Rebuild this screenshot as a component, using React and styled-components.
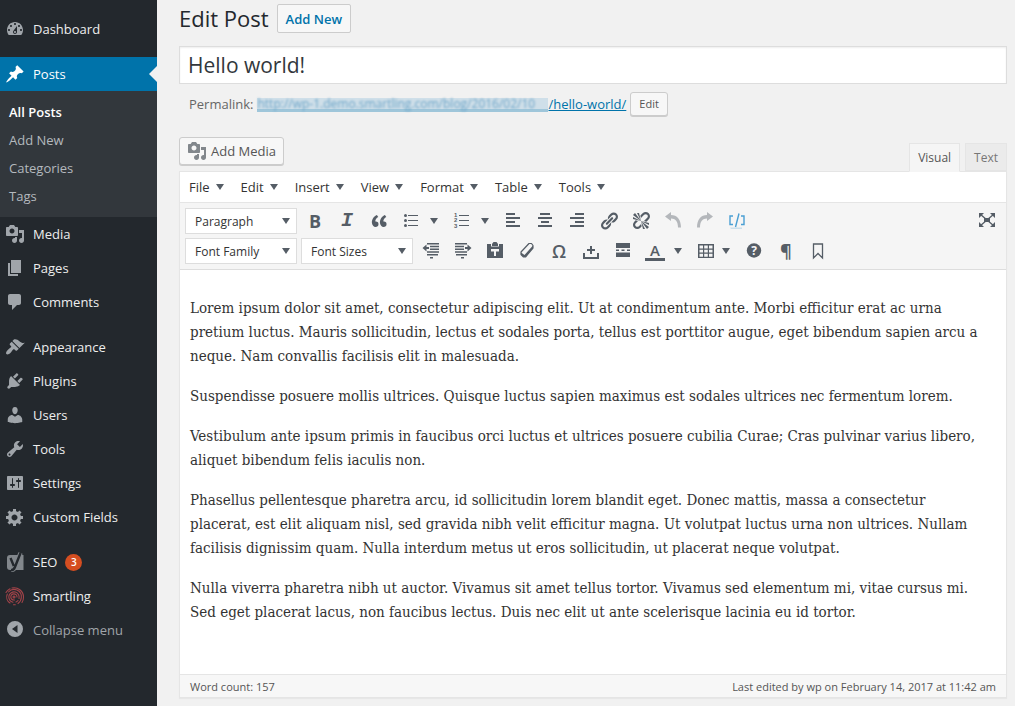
import React from "react";
import styled, { createGlobalStyle, css } from "styled-components";

const sans = '"Open Sans", "Noto Sans", sans-serif';
const ink = "#555d66";

const GlobalStyle = createGlobalStyle`
  *, *::before, *::after { box-sizing: border-box; }
  html { background: #f1f1f1; }
  body { margin: 0; font-family: ${sans}; font-size: 13px; color: #444; }
  button, input, select { font-family: inherit; margin: 0; }
  a { color: inherit; text-decoration: none; }
`;

/* ---------- shell ---------- */

const Page = styled.div`
  display: flex;
  min-height: 100vh;
`;

const Sidebar = styled.nav`
  flex: none;
  width: 157px;
  padding-top: 12px;
  background: #23282d;
`;

const MenuList = styled.ul`
  list-style: none;
  margin: 0;
  padding: 0;
  display: flex;
  flex-direction: column;
`;

const MenuGroup = styled(MenuList)`
  margin-bottom: 11px;
`;

const MenuLink = styled.a`
  position: relative;
  display: flex;
  align-items: center;
  gap: 8px;
  height: 34px;
  padding-left: 5px;
  color: #eee;
  svg { color: #a0a5aa; }
  ${(p) => p.$current && css`
    background: #0073aa;
    color: #fff;
    svg { color: #fff; }
    &::after {
      content: "";
      position: absolute;
      right: 0;
      top: 9px;
      border: 8px solid transparent;
      border-left-width: 0;
      border-right-color: #f1f1f1;
    }
  `}
`;

const CollapseButton = styled.button`
  display: flex;
  align-items: center;
  gap: 8px;
  width: 100%;
  height: 34px;
  padding: 0 0 0 5px;
  border: 0;
  background: none;
  font-size: 13px;
  color: #a0a5aa;
`;

const SubMenu = styled(MenuList)`
  padding: 7px 0;
  background: #32373c;
`;

const SubLink = styled.a`
  display: block;
  padding-left: 9px;
  line-height: 28px;
  font-weight: ${(p) => (p.$current ? 600 : 400)};
  color: ${(p) => (p.$current ? "#fff" : "#b4b9be")};
`;

const Badge = styled.span`
  display: flex;
  align-items: center;
  justify-content: center;
  width: 17px;
  height: 17px;
  border-radius: 50%;
  background: #d54e21;
  color: #fff;
  font-size: 10px;
  font-weight: 600;
`;

const Main = styled.main`
  flex: 1;
  min-width: 0;
  padding: 4px 8px 8px 22px;
`;

/* ---------- post header ---------- */

const TitleBar = styled.header`
  display: flex;
  align-items: center;
  gap: 8px;
  height: 29px;
`;

const Heading = styled.h1`
  margin: 0;
  font-size: 22px;
  font-weight: 400;
  line-height: 29px;
  color: #23282d;
`;

const AddNew = styled.a`
  display: flex;
  align-items: center;
  height: 29px;
  padding: 0 8px;
  border: 1px solid #ccc;
  border-radius: 2px;
  background: #f7f7f7;
  color: #0073aa;
  font-weight: 600;
`;

const TitleInput = styled.input`
  display: block;
  width: 100%;
  height: 38px;
  margin-top: 13px;
  padding: 0 8px;
  border: 1px solid #ddd;
  border-radius: 0;
  box-shadow: inset 0 1px 2px rgba(0, 0, 0, 0.07);
  background: #fff;
  font-size: 21px;
  color: #32373c;
  outline: 0;
`;

const Permalink = styled.div`
  display: flex;
  align-items: center;
  height: 25px;
  margin-top: 7px;
  padding-left: 10px;
  gap: 4px;
  color: #666;
`;

const PermalinkUrl = styled.a`
  display: flex;
  align-items: center;
  color: #0073aa;
  line-height: 16px;
`;

const Obscured = styled.span`
  min-width: 291px;
  white-space: nowrap;
  background: linear-gradient(transparent 2px, #cfdfe9 2px, #cfdfe9 13px, #9fc6da 13px);
  font-size: 12px;
  color: #6da5c8;
  span { filter: blur(1px); }
`;

const Slug = styled.span`
  text-decoration: underline;
`;

const Button = styled.button`
  display: flex;
  align-items: center;
  gap: 4px;
  height: ${(p) => (p.$small ? 24 : 28)}px;
  padding: 0 ${(p) => (p.$small ? 8 : 7)}px;
  border: 1px solid #ccc;
  border-radius: 3px;
  box-shadow: 0 1px 0 #ccc;
  background: #f7f7f7;
  font-size: ${(p) => (p.$small ? 11 : 13)}px;
  color: #555;
  svg { color: #82878c; }
`;

/* ---------- editor ---------- */

const EditorTop = styled.div`
  display: flex;
  justify-content: space-between;
  margin-top: 21px;
  height: 34px;
`;

const Tabs = styled.div`
  display: flex;
  align-items: flex-end;
  gap: 5px;
`;

const Tab = styled.button`
  position: relative;
  height: ${(p) => (p.$active ? 29 : 28)}px;
  margin-bottom: ${(p) => (p.$active ? -1 : 0)}px;
  padding: 0 8px;
  border: 1px solid #e5e5e5;
  border-bottom-color: ${(p) => (p.$active ? "#f5f5f5" : "#e5e5e5")};
  background: ${(p) => (p.$active ? "#f5f5f5" : "#ebebeb")};
  font-size: 12px;
  color: ${(p) => (p.$active ? "#555" : "#777")};
`;

const Editor = styled.section`
  border: 1px solid #e5e5e5;
  box-shadow: 0 1px 1px rgba(0, 0, 0, 0.04);
  background: #fff;
`;

const MenuBar = styled.div`
  display: flex;
  align-items: center;
  gap: 17px;
  height: 31px;
  padding-left: 9px;
  border-bottom: 1px solid #e5e5e5;
`;

const MenuButton = styled.button`
  display: flex;
  align-items: center;
  gap: 6px;
  height: 24px;
  padding: 0;
  border: 0;
  background: none;
  font-size: 13px;
  color: #333;
`;

const Caret = styled.i`
  flex: none;
  border: 4px solid transparent;
  border-top: 6px solid ${ink};
  border-bottom: 0;
`;

const Toolbar = styled.div`
  display: flex;
  flex-direction: column;
  gap: 4px;
  padding: 5px 3px 5px 5px;
  border-bottom: 1px solid #ddd;
  background: #f5f5f5;
`;

const ToolRow = styled.div`
  display: flex;
  align-items: center;
  height: 26px;
`;

const SelectBox = styled.label`
  position: relative;
  display: flex;
  align-items: center;
  width: 112px;
  height: 26px;
  margin-right: ${(p) => p.$gap}px;
  ${Caret} {
    position: absolute;
    right: 7px;
    pointer-events: none;
  }
`;

const Select = styled.select`
  appearance: none;
  width: 100%;
  height: 100%;
  padding: 0 20px 0 9px;
  border: 1px solid #ddd;
  border-radius: 0;
  background: #fff;
  font-size: 12px;
  color: #333;
`;

const ToolButton = styled.button`
  display: flex;
  align-items: center;
  justify-content: center;
  width: 32px;
  height: 26px;
  padding: 0;
  border: 0;
  background: none;
  color: ${(p) => p.$color || ink};
  opacity: ${(p) => (p.disabled ? 0.4 : 1)};
`;

const ArrowButton = styled(ToolButton)`
  width: ${(p) => (p.$narrow ? 16 : 19)}px;
  padding-right: ${(p) => (p.$narrow ? 8 : 5)}px;
`;

const Letter = styled.span`
  font-family: ${(p) => p.$family || sans};
  font-size: ${(p) => p.$size || 18}px;
  font-weight: ${(p) => p.$weight || 700};
  font-style: ${(p) => (p.$italic ? "italic" : "normal")};
  line-height: 18px;
`;

const ColorLetter = styled(Letter)`
  width: 20px;
  border-bottom: 3px solid ${ink};
  line-height: 16px;
`;

const Spacer = styled.span`
  flex: 1;
`;

const Content = styled.article`
  padding: 26px 24px 50px 10px;
  font-family: "DejaVu Serif Condensed", "DejaVu Serif", serif;
  font-size: 15px;
  line-height: 24px;
  color: #333;
  p { margin: 0 0 16px; }
  p:last-child { margin: 0; }
`;

const StatusBar = styled.footer`
  display: flex;
  align-items: center;
  justify-content: space-between;
  height: 23px;
  padding: 0 10px;
  border-top: 1px solid #e5e5e5;
  background: #f7f7f7;
  font-size: 11px;
  color: #555;
`;

/* ---------- icons ---------- */

const Svg = styled.svg.attrs({ viewBox: "0 0 20 20", "aria-hidden": true })`
  flex: none;
  width: 20px;
  height: 20px;
  fill: currentColor;
`;

const paths = {
  dashboard: "M3.76 16h12.48c1.1-1.37 1.76-3.11 1.76-5 0-4.42-3.58-8-8-8s-8 3.58-8 8c0 1.89.66 3.63 1.76 5zM10 4c.55 0 1 .45 1 1s-.45 1-1 1-1-.45-1-1 .45-1 1-1zM6 6c.55 0 1 .45 1 1s-.45 1-1 1-1-.45-1-1 .45-1 1-1zm8 0c.55 0 1 .45 1 1s-.45 1-1 1-1-.45-1-1 .45-1 1-1zm-5.37 5.55L12 7v6c0 1.1-.9 2-2 2s-2-.9-2-2c0-.57.24-1.08.63-1.45zM4 10c.55 0 1 .45 1 1s-.45 1-1 1-1-.45-1-1 .45-1 1-1zm12 0c.55 0 1 .45 1 1s-.45 1-1 1-1-.45-1-1 .45-1 1-1zm-5 3c0-.55-.45-1-1-1s-1 .45-1 1 .45 1 1 1 1-.45 1-1z",
  pin: "M10.44 3.02l1.82-1.82 6.36 6.35-1.83 1.82c-1.05-.68-2.48-.57-3.41.36l-.75.75c-.92.93-1.04 2.35-.35 3.41l-1.83 1.82-2.41-2.41-2.8 2.79c-.42.42-3.38 2.71-3.8 2.29s1.86-3.39 2.28-3.81l2.79-2.79L4.1 9.36l1.83-1.82c1.05.69 2.48.57 3.4-.36l.75-.75c.93-.92 1.05-2.35.36-3.41z",
  media: "M13 11V4c0-.55-.45-1-1-1h-1.67L9 1H5L3.67 3H2c-.55 0-1 .45-1 1v7c0 .55.45 1 1 1h10c.55 0 1-.45 1-1zM7 4.5c1.38 0 2.5 1.12 2.5 2.5S8.38 9.5 7 9.5 4.5 8.38 4.5 7 5.62 4.5 7 4.5zM14 6h5v10.5c0 1.38-1.12 2.5-2.5 2.5S14 17.88 14 16.5s1.12-2.5 2.5-2.5c.17 0 .34.02.5.05V9h-3V6zm-4 8.05V13h2v3.5c0 1.38-1.12 2.5-2.5 2.5S7 17.88 7 16.5 8.12 14 9.5 14c.17 0 .34.02.5.05z",
  page: "M6 15V2h10v13H6zm-1 1h8v2H3V5h2v11z",
  comment: "M5 2h9c1.1 0 2 .9 2 2v7c0 1.1-.9 2-2 2h-2l-5 5v-5H5c-1.1 0-2-.9-2-2V4c0-1.1.9-2 2-2z",
  brush: "M14.48 11.06L7.41 3.99l1.5-1.5c.5-.56 2.3-.47 3.51.32 1.21.8 1.43 1.28 2.91 2.1 1.18.64 2.45 1.26 4.45.85zm-.71.71L6.7 4.7 4.93 6.47c-.39.39-.39 1.02 0 1.41l1.06 1.06c.39.39.39 1.03 0 1.42-.6.6-1.43 1.11-2.21 1.69-.35.26-.7.53-1.01.84C1.43 14.23.4 16.08 1.4 17.07c.99 1 2.84-.03 4.18-1.36.31-.31.58-.66.85-1.02.57-.78 1.08-1.61 1.69-2.21.39-.39 1.02-.39 1.41 0l1.06 1.06c.39.39 1.02.39 1.41 0z",
  plug: "M13.11 4.36L9.87 7.6 8 5.73l3.24-3.24c.35-.34 1.05-.2 1.56.32.52.51.66 1.21.31 1.55zm-8 1.77l.91-1.12 9.01 9.01-1.19.84c-.71.71-2.63 1.16-3.82 1.16H6.14L4.9 17.26c-.59.59-1.54.59-2.12 0-.59-.58-.59-1.53 0-2.12l1.24-1.24v-3.88c0-1.13.4-3.19 1.09-3.89zm7.26 3.97l3.24-3.24c.34-.35 1.04-.21 1.55.31.52.51.66 1.21.31 1.55l-3.24 3.25z",
  user: "M10 9.25c-2.27 0-2.73-3.44-2.73-3.44C7 4.02 7.82 2 9.97 2c2.16 0 2.98 2.02 2.71 3.81 0 0-.41 3.44-2.68 3.44zm0 2.57L12.72 10c2.39 0 4.52 2.33 4.52 4.53v2.49s-3.65 1.13-7.24 1.13c-3.65 0-7.24-1.13-7.24-1.13v-2.49c0-2.25 1.94-4.48 4.47-4.48z",
  wrench: "M16.68 9.77c-1.34 1.34-3.3 1.67-4.95.99l-5.41 6.52c-.99.99-2.59.99-3.58 0s-.99-2.59 0-3.57l6.52-5.42c-.68-1.65-.35-3.61.99-4.95 1.28-1.28 3.12-1.62 4.72-1.06l-2.89 2.89 2.82 2.82 2.86-2.87c.53 1.58.18 3.39-1.08 4.65zM3.81 16.21c.4.39 1.04.39 1.43 0 .4-.4.4-1.04 0-1.43-.39-.4-1.03-.4-1.43 0-.39.39-.39 1.03 0 1.43z",
  sliders: "M18 16V4c0-.55-.45-1-1-1H3c-.55 0-1 .45-1 1v12c0 .55.45 1 1 1h14c.55 0 1-.45 1-1zM8 11h1c.55 0 1 .45 1 1s-.45 1-1 1H8v1.5c0 .28-.22.5-.5.5s-.5-.22-.5-.5V13H6c-.55 0-1-.45-1-1s.45-1 1-1h1V5.5c0-.28.22-.5.5-.5s.5.22.5.5V11zm5-2h-1c-.55 0-1-.45-1-1s.45-1 1-1h1V5.5c0-.28.22-.5.5-.5s.5.22.5.5V7h1c.55 0 1 .45 1 1s-.45 1-1 1h-1v5.5c0 .28-.22.5-.5.5s-.5-.22-.5-.5V9z",
  gear: "M18 12h-2.18c-.17.7-.44 1.35-.81 1.93l1.54 1.54-2.1 2.1-1.54-1.54c-.58.36-1.23.63-1.91.79V19H8v-2.18c-.68-.16-1.33-.43-1.91-.79l-1.54 1.54-2.12-2.12 1.54-1.54c-.36-.58-.63-1.23-.79-1.91H1V9.03h2.17c.16-.7.44-1.35.8-1.94L2.43 5.55l2.1-2.1 1.54 1.54c.58-.37 1.24-.64 1.93-.81V2h3v2.18c.68.16 1.33.43 1.91.79l1.54-1.54 2.12 2.12-1.54 1.54c.36.59.64 1.24.8 1.94H18V12zm-8.5 1.5c1.66 0 3-1.34 3-3s-1.34-3-3-3-3 1.34-3 3 1.34 3 3 3z",
  collapse: "M10 1a8 8 0 1 0 0 16a8 8 0 0 0 0-16zM12.5 5v8L7 9z",
  quote: "M9.49 13.22c0-.74-.2-1.38-.61-1.9-.62-.78-1.83-.88-2.53-.72-.29-1.65 1.11-3.75 2.92-4.65L7.88 4c-2.73 1.3-5.42 4.28-4.96 8.05C3.21 14.43 4.59 16 6.54 16c.85 0 1.56-.25 2.12-.75s.83-1.18.83-2.03zm8.05 0c0-.74-.2-1.38-.61-1.9-.63-.78-1.83-.88-2.53-.72-.29-1.65 1.11-3.75 2.92-4.65L15.93 4c-2.73 1.3-5.41 4.28-4.95 8.05.29 2.38 1.66 3.95 3.61 3.95.85 0 1.56-.25 2.12-.75s.83-1.18.83-2.03z",
  alignLeft: "M3 2h9v2H3zM3 6h14v2H3zM3 10h9v2H3zM3 14h14v2H3z",
  alignCenter: "M5 2h10v2H5zM3 6h14v2H3zM6 10h8v2H6zM3 14h14v2H3z",
  alignRight: "M8 2h9v2H8zM3 6h14v2H3zM8 10h9v2H8zM3 14h14v2H3z",
  link: "M17.74 2.76c1.68 1.69 1.68 4.41 0 6.1l-1.53 1.52c-1.12 1.12-2.7 1.47-4.14 1.09l2.62-2.61.76-.77.76-.76c.84-.84.84-2.2 0-3.04-.84-.85-2.2-.85-3.04 0l-.77.76-3.38 3.38c-.37-1.44-.02-3.02 1.1-4.14l1.52-1.53c1.69-1.68 4.42-1.68 6.1 0zM8.59 13.43l5.34-5.34c.42-.42.42-1.1 0-1.52-.44-.43-1.13-.39-1.53 0l-5.33 5.34c-.42.42-.42 1.1 0 1.52.44.43 1.13.39 1.52 0zm-.76 2.29l4.14-4.15c.38 1.44.03 3.02-1.09 4.14l-1.52 1.53c-1.69 1.68-4.41 1.68-6.1 0-1.68-1.68-1.68-4.42 0-6.1l1.53-1.52c1.12-1.12 2.7-1.47 4.14-1.1l-4.14 4.15c-.85.84-.85 2.2 0 3.05.84.84 2.2.84 3.04 0z",
  unlink: "M17.74 2.26c1.68 1.69 1.68 4.41 0 6.1l-1.53 1.52c-.32.33-.69.58-1.08.77L13 10l1.69-1.64.76-.77.76-.76c.84-.84.84-2.2 0-3.04-.84-.85-2.2-.85-3.04 0l-.77.76-.76.76L10 7l-.65-2.14c.19-.38.44-.75.77-1.07l1.52-1.53c1.69-1.68 4.42-1.68 6.1 0zM2 4l8 6-6-8zm4-2l4 8-2-8H6zM2 6l8 4-8-2V6zm7.36 7.69L10 13l.74 2.35-1.38 1.39c-1.69 1.68-4.41 1.68-6.1 0-1.68-1.68-1.68-4.42 0-6.1l1.39-1.38L7 10l-.69.64-1.52 1.53c-.85.84-.85 2.2 0 3.04.84.85 2.2.85 3.04 0zM18 16l-8-6 6 8zm-4 2l-4-8 2 8h2zm4-4l-8-4 8 2v2z",
  undo: "M2 5.5L8 1v3c6 0 10 4.5 10 12.5h-3C15 10.5 12.5 7.5 8 7.500V10z",
  redo: "M18 5.5L12 1v3C6 4 2 8.5 2 16.5h3C5 10.5 7.5 7.5 12 7.500V10z",
  outdent: "M1.500 7L5.500 3.500V6H8v2H5.500v2.500zM6 2h12v1.600H6zM9 4.700h9v1.600H9zM9 7.400h9V9H9zM6 10.200h12v1.600H6zM6 13h11v1.600H6zM9 16h3v1.600H9z",
  indent: "M18.500 7L14.500 3.500V6H12v2h2.500v2.500zM2 2h12v1.600H2zM2 4.700h9v1.600H2zM2 7.400h9V9H2zM2 10.200h12v1.600H2zM3 13h11v1.600H3zM8 16h3v1.600H8z",
  nonbreaking: "M2 12h2v4h12v-4h2v6H2zM9 5h2v3h3v2h-3v3H9v-3H6V8h3z",
  more: "M3 2h14v5H3zM3 8.500h3V10H3zM8.500 8.500h3V10h-3zM14 8.500h3V10h-3zM3 11.500h14V16H3z",
  table: "M2 3h16v14H2zM3.500 4.500v3h3.500v-3zM8.200 4.500v3h3.600v-3zM13 4.500v3h3.500v-3zM3.500 8.700v2.800h3.500V8.700zM8.200 8.700v2.800h3.600V8.700zM13 8.700v2.800h3.500V8.700zM3.500 12.700v3h3.500v-3zM8.200 12.700v3h3.600v-3zM13 12.700v3h3.500v-3z",
};

const Icon = ({ name }) => (
  <Svg><path fillRule="evenodd" d={paths[name]} /></Svg>
);

const YoastIcon = () => (
  <Svg>
    <path fill="#82878c" d="M5 3h13.500v15H5c-2 0-3-1-3-3V6c0-2 1-3 3-3z" />
    <path fill="none" stroke="#82878c" strokeWidth="4.500" d="M15.500 1L10 15c-.8 2.200-2 3-4 3" />
    <path fill="none" stroke="#23282d" strokeWidth="2.400" d="M5.500 6l3.300 8M15.500 1L10 15c-.8 2.200-2 3.200-4 3.200" />
  </Svg>
);

const SmartlingIcon = () => (
  <Svg>
    <g fill="none" stroke="#a5444a" strokeWidth="1.100" strokeLinecap="round">
      <circle cx="9" cy="11" r="1" />
      <path d="M9.500 14a3.100 3.100 0 1 1 2.500-3M8 16.200A5.200 5.200 0 1 1 14 12.500M11 16a5 5 0 0 0 2-1.500M5 17A7.300 7.300 0 0 1 2.300 8M3.500 6A7.300 7.300 0 0 1 16.300 11.500C16.200 14 15 16 13 17.500M1 6.500A9.500 9.500 0 0 1 5 2.700M7 2A9.500 9.500 0 0 1 18.500 11c0 2-.5 4-1.500 5.500M8.500 18.700h1.800" />
    </g>
  </Svg>
);

const listLines = "M7 4h10v1H7zM7 9h10v1H7zM7 14h10v1H7z";

const BulletIcon = () => (
  <Svg>
    <path d={listLines} />
    <circle cx="4.500" cy="4.500" r="1.500" /><circle cx="4.500" cy="9.500" r="1.500" /><circle cx="4.500" cy="14.500" r="1.500" />
  </Svg>
);

const NumberIcon = () => (
  <Svg>
    <path d={listLines} />
    <g fontFamily="Liberation Sans" fontSize="6" fontWeight="700">
      <text x="2" y="6">1</text><text x="2" y="11">2</text><text x="2" y="17">3</text>
    </g>
  </Svg>
);

const ShortcodeIcon = () => (
  <Svg>
    <g fill="none" stroke="currentColor" strokeWidth="1.400">
      <path d="M6 5H3v8.500h3M14 5h3v8.500h-3M12 2.500L8.500 16" />
    </g>
    <path opacity=".25" d="M3 16.500h12v1.500H4z" />
  </Svg>
);

const PasteIcon = () => (
  <Svg>
    <path fillRule="evenodd" d="M7 3l1.500-2h3L13 3v2H7zM2 3h4v2.500h8V3h4v14H2zM6 8v2.500h3V15h2v-4.500h3V8z" />
  </Svg>
);

const EraserIcon = () => (
  <Svg>
    <path fill="none" stroke="currentColor" strokeWidth="1.200" strokeLinejoin="round" d="M12 2.500h2.500l1.500 2V7L8.500 16h-2L4 13.500V11z" />
    <path d="M4 11.500L7.500 14 16 4.500V7l-7.500 9h-2L4 13.500z" />
  </Svg>
);

const HelpIcon = () => (
  <Svg>
    <circle cx="10" cy="9.500" r="7.200" />
    <text x="10" y="14" textAnchor="middle" fill="#f5f5f5" fontFamily="Open Sans" fontSize="12" fontWeight="700">?</text>
  </Svg>
);

const BookmarkIcon = () => (
  <Svg><path fill="none" stroke="currentColor" strokeWidth="1.300" d="M5.500 3h9v14L10 12.500 5.500 17z" /></Svg>
);

const FullscreenIcon = () => (
  <Svg>
    <path d="M2 2h5L2 7zM18 2v5l-5-5zM2 16v-5l5 5zM18 16h-5l5-5zM7 7h6v4H7z" />
    <path fill="none" stroke="currentColor" strokeWidth="1.300" d="M3 3l14 12M17 3L3 15" />
  </Svg>
);

/* ---------- parts ---------- */

const MenuItem = ({ icon, label, current, badge, children }) => (
  <li>
    <MenuLink href="#" $current={current} aria-current={current ? "page" : undefined}>
      {typeof icon === "string" ? <Icon name={icon} /> : icon}
      <span>{label}</span>
      {badge && <Badge>{badge}</Badge>}
    </MenuLink>
    {children}
  </li>
);

const Tool = ({ label, icon, children, ...rest }) => (
  <ToolButton type="button" aria-label={label} {...rest}>
    {icon ? <Icon name={icon} /> : children}
  </ToolButton>
);

const Arrow = ({ label, narrow }) => (
  <ArrowButton type="button" aria-label={label} $narrow={narrow}><Caret /></ArrowButton>
);

const DropDown = ({ label, gap = 2 }) => (
  <SelectBox $gap={gap}>
    <Select aria-label={label}><option>{label}</option></Select>
    <Caret />
  </SelectBox>
);

const paragraphs = [
  "Lorem ipsum dolor sit amet, consectetur adipiscing elit. Ut at condimentum ante. Morbi efficitur erat ac urna pretium luctus. Mauris sollicitudin, lectus et sodales porta, tellus est porttitor augue, eget bibendum sapien arcu a neque. Nam convallis facilisis elit in malesuada.",
  "Suspendisse posuere mollis ultrices. Quisque luctus sapien maximus est sodales ultrices nec fermentum lorem.",
  "Vestibulum ante ipsum primis in faucibus orci luctus et ultrices posuere cubilia Curae; Cras pulvinar varius libero, aliquet bibendum felis iaculis non.",
  "Phasellus pellentesque pharetra arcu, id sollicitudin lorem blandit eget. Donec mattis, massa a consectetur placerat, est elit aliquam nisl, sed gravida nibh velit efficitur magna. Ut volutpat luctus urna non ultrices. Nullam facilisis dignissim quam. Nulla interdum metus ut eros sollicitudin, ut placerat neque volutpat.",
  "Nulla viverra pharetra nibh ut auctor. Vivamus sit amet tellus tortor. Vivamus sed elementum mi, vitae cursus mi. Sed eget placerat lacus, non faucibus lectus. Duis nec elit ut ante scelerisque lacinia eu id tortor.",
];

export default function App() {
  return (
    <>
      <GlobalStyle />
      <Page>
        <Sidebar aria-label="Main menu">
          <MenuGroup>
            <MenuItem icon="dashboard" label="Dashboard" />
          </MenuGroup>
          <MenuGroup>
            <MenuItem icon="pin" label="Posts" current>
              <SubMenu>
                <li><SubLink href="#" $current>All Posts</SubLink></li>
                <li><SubLink href="#">Add New</SubLink></li>
                <li><SubLink href="#">Categories</SubLink></li>
                <li><SubLink href="#">Tags</SubLink></li>
              </SubMenu>
            </MenuItem>
            <MenuItem icon="media" label="Media" />
            <MenuItem icon="page" label="Pages" />
            <MenuItem icon="comment" label="Comments" />
          </MenuGroup>
          <MenuGroup>
            <MenuItem icon="brush" label="Appearance" />
            <MenuItem icon="plug" label="Plugins" />
            <MenuItem icon="user" label="Users" />
            <MenuItem icon="wrench" label="Tools" />
            <MenuItem icon="sliders" label="Settings" />
            <MenuItem icon="gear" label="Custom Fields" />
          </MenuGroup>
          <MenuGroup>
            <MenuItem icon={<YoastIcon />} label="SEO" badge="3" />
            <MenuItem icon={<SmartlingIcon />} label="Smartling" />
            <li><CollapseButton type="button"><Icon name="collapse" />Collapse menu</CollapseButton></li>
          </MenuGroup>
        </Sidebar>

        <Main>
          <TitleBar>
            <Heading>Edit Post</Heading>
            <AddNew href="#">Add New</AddNew>
          </TitleBar>
          <TitleInput aria-label="Post title" defaultValue="Hello world!" />
          <Permalink>
            <span>Permalink:</span>
            <PermalinkUrl href="#">
              <Obscured><span>http://wp-1.demo.smartling.com/blog/2016/02/10</span></Obscured>
              <Slug>/hello-world/</Slug>
            </PermalinkUrl>
            <Button type="button" $small>Edit</Button>
          </Permalink>

          <EditorTop>
            <Button type="button"><Icon name="media" />Add Media</Button>
            <Tabs>
              <Tab type="button" $active>Visual</Tab>
              <Tab type="button">Text</Tab>
            </Tabs>
          </EditorTop>

          <Editor>
            <MenuBar>
              {["File", "Edit", "Insert", "View", "Format", "Table", "Tools"].map((name) => (
                <MenuButton type="button" key={name}>{name}<Caret /></MenuButton>
              ))}
            </MenuBar>
            <Toolbar>
              <ToolRow>
                <DropDown label="Paragraph" />
                <Tool label="Bold"><Letter>B</Letter></Tool>
                <Tool label="Italic"><Letter $family='"Liberation Mono", monospace' $size={20} $italic>I</Letter></Tool>
                <Tool label="Blockquote" icon="quote" />
                <Tool label="Bulleted list"><BulletIcon /></Tool>
                <Arrow label="Bullet styles" />
                <Tool label="Numbered list"><NumberIcon /></Tool>
                <Arrow label="Number styles" />
                <Tool label="Align left" icon="alignLeft" />
                <Tool label="Align center" icon="alignCenter" />
                <Tool label="Align right" icon="alignRight" />
                <Tool label="Insert link" icon="link" />
                <Tool label="Remove link" icon="unlink" />
                <Tool label="Undo" icon="undo" disabled />
                <Tool label="Redo" icon="redo" disabled />
                <Tool label="Shortcode" $color="#4a9fd3"><ShortcodeIcon /></Tool>
                <Spacer />
                <Tool label="Fullscreen"><FullscreenIcon /></Tool>
              </ToolRow>
              <ToolRow>
                <DropDown label="Font Family" gap={4} />
                <DropDown label="Font Sizes" />
                <Tool label="Decrease indent" icon="outdent" />
                <Tool label="Increase indent" icon="indent" />
                <Tool label="Paste as text"><PasteIcon /></Tool>
                <Tool label="Clear formatting"><EraserIcon /></Tool>
                <Tool label="Special character"><Letter $weight={600}>Ω</Letter></Tool>
                <Tool label="Nonbreaking space" icon="nonbreaking" />
                <Tool label="Read more" icon="more" />
                <Tool label="Text color"><ColorLetter $size={15} $weight={600}>A</ColorLetter></Tool>
                <Arrow label="Text color options" />
                <Tool label="Table" icon="table" />
                <Arrow label="Table options" narrow />
                <Tool label="Keyboard shortcuts"><HelpIcon /></Tool>
                <Tool label="Show blocks"><Letter>¶</Letter></Tool>
                <Tool label="Anchor"><BookmarkIcon /></Tool>
              </ToolRow>
            </Toolbar>
            <Content>
              {paragraphs.map((text) => <p key={text}>{text}</p>)}
            </Content>
            <StatusBar>
              <span>Word count: 157</span>
              <span>Last edited by wp on February 14, 2017 at 11:42 am</span>
            </StatusBar>
          </Editor>
        </Main>
      </Page>
    </>
  );
}
